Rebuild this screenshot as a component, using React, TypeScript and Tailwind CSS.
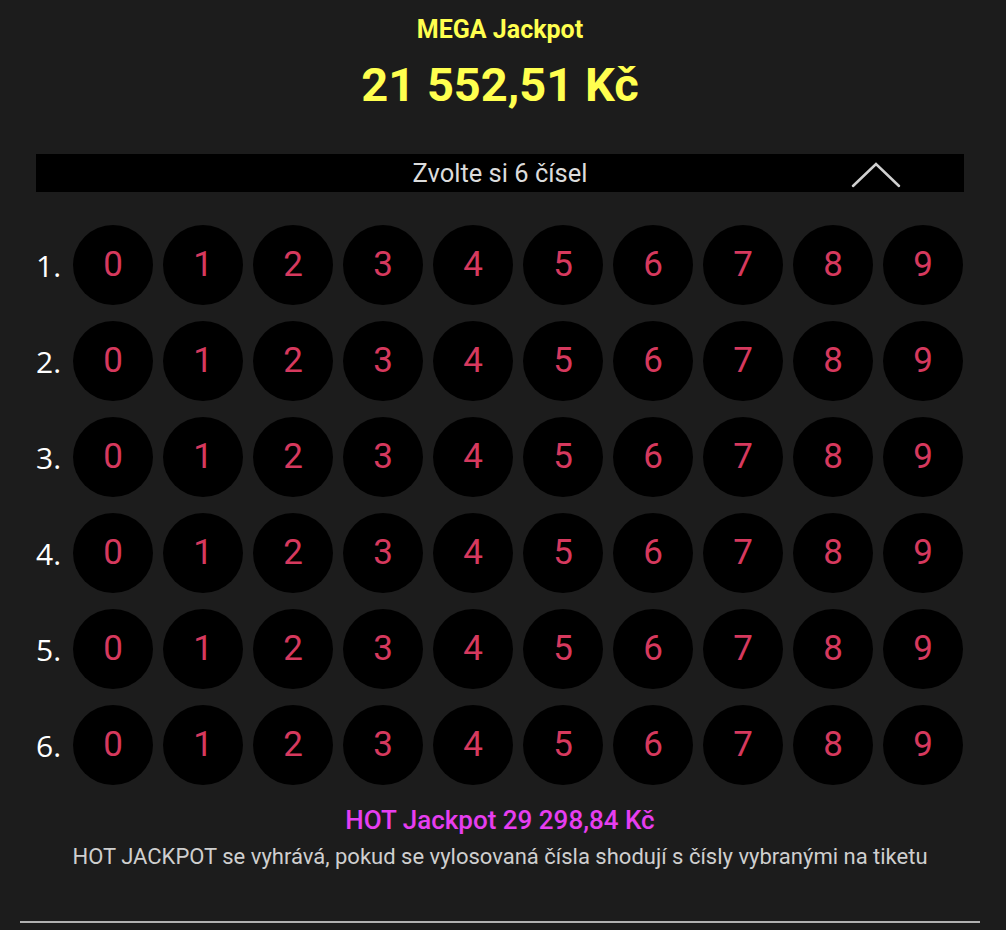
import React from 'react';

const ROWS = [1, 2, 3, 4, 5, 6];
const DIGITS = [0, 1, 2, 3, 4, 5, 6, 7, 8, 9];

const ChevronUp: React.FC = () => (
  <svg width="50" height="26" viewBox="0 0 50 26" fill="none">
    <path d="M2 24 L25 2 L48 24" stroke="#d0d0d0" strokeWidth={2.5} strokeLinecap="round" strokeLinejoin="miter" />
  </svg>
);

export default function App() {
  return (
    <div className="min-h-[930px] w-full bg-[#1c1c1c] text-white">
      <div
        className="w-[1000px] flex flex-col items-center"
        style={{ fontFamily: 'Roboto, "Noto Sans", sans-serif' }}
      >
        {/* Jackpot header */}
        <div className="pt-[15px] text-[25px] leading-[30px] font-bold text-[#ffff4f]">MEGA Jackpot</div>
        <div className="mt-[12px] text-[47px] leading-[56px] font-bold text-[#ffff4f]">21 552,51 Kč</div>

        {/* Pick bar */}
        <div className="mt-[41px] w-[928px] h-[38px] bg-black relative flex items-center justify-center">
          <span className="text-[25.5px] text-[#dcdcdc]">Zvolte si 6 čísel</span>
          <span className="absolute left-[815px] top-[8px]">
            <ChevronUp />
          </span>
        </div>

        {/* Number grid */}
        <div className="mt-[33px] w-[928px] flex flex-col gap-[16px]">
          {ROWS.map((row) => (
            <div key={row} className="flex items-center">
              <span
                className="w-[37px] text-[30px] text-white"
                style={{ fontFamily: '"Open Sans", sans-serif' }}
              >
                {row}.
              </span>
              <div className="flex gap-[10px]">
                {DIGITS.map((d) => (
                  <button
                    key={d}
                    className="w-[80px] h-[80px] rounded-full bg-black flex items-center justify-center text-[35px] font-normal text-[#d6395e]"
                  >
                    {d}
                  </button>
                ))}
              </div>
            </div>
          ))}
        </div>

        {/* Hot jackpot */}
        <div className="mt-[20px] text-[26px] leading-[30px] font-medium text-[#e63ef0]">HOT Jackpot 29 298,84 Kč</div>
        <div className="mt-[9px] text-[22px] leading-[26px] text-[#cfcfcf]">
          HOT JACKPOT se vyhrává, pokud se vylosovaná čísla shodují s čísly vybranými na tiketu
        </div>

        <div className="mt-[51px] w-[960px] h-[2px] bg-[#b0b0b0]" />
      </div>
    </div>
  );
}
